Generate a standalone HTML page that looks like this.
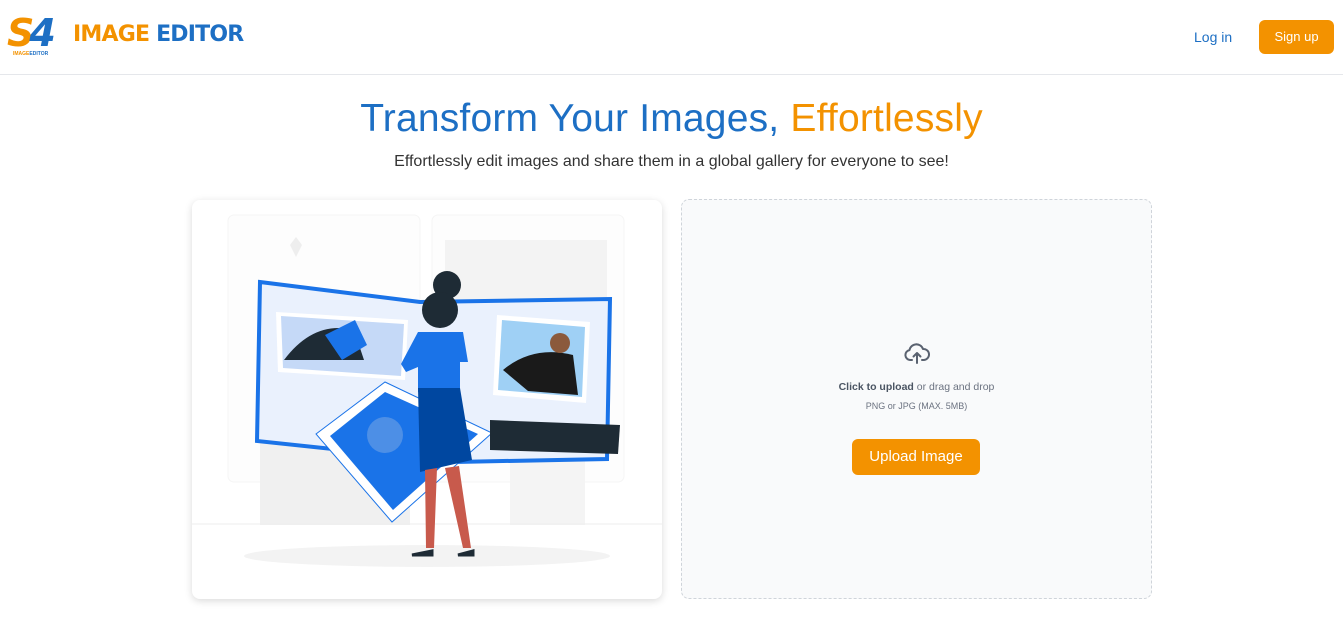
<!DOCTYPE html>
<html><head><meta charset="utf-8"><style>
*{margin:0;padding:0;box-sizing:border-box}
body{width:1343px;height:625px;background:#fff;font-family:"Liberation Sans",sans-serif;position:relative;overflow:hidden}
.hdr{position:absolute;left:0;top:0;width:1343px;height:75px;border-bottom:1px solid #e5e7eb}
.abs{position:absolute}
.t1{font-family:"DejaVu Sans","Liberation Sans",sans-serif;font-weight:bold}
</style></head><body>
<div class="hdr">
 <div class="abs t1" style="left:7px;top:12px;font-size:38px;font-style:italic;color:#f39200;letter-spacing:-5px;line-height:42px">S<span style="color:#1d6fc4">4</span></div>
 <div class="abs" style="left:13px;top:51px;font-size:5px;font-weight:bold;color:#f39200">IMAGE<span style="color:#1d6fc4">EDITOR</span></div>
 <div class="abs t1" style="left:73px;top:21px;font-size:22px;line-height:28px;color:#f39200;letter-spacing:-0.8px">IMAGE <span style="color:#1d6fc4">EDITOR</span></div>
 <div class="abs" style="left:1194px;top:29px;font-size:14px;color:#1d6fc4">Log in</div>
 <div class="abs" style="left:1259px;top:20px;width:75px;height:34px;background:#f39200;border-radius:6px;color:#fff;font-size:13px;text-align:center;line-height:34px">Sign up</div>
</div>
<div class="abs" style="left:0;width:1343px;top:96px;text-align:center;font-size:39px;color:#1d6fc4;line-height:46px;letter-spacing:0.2px">Transform Your Images, <span style="color:#f39200">Effortlessly</span></div>
<div class="abs" style="left:0;width:1343px;top:151px;text-align:center;font-size:16px;color:#333;line-height:22px">Effortlessly edit images and share them in a global gallery for everyone to see!</div>
<div class="abs" style="left:192px;top:200px;width:470px;height:399px;border-radius:8px;box-shadow:0 2px 8px rgba(0,0,0,.15);overflow:hidden;background:#fff">
<svg width="470" height="399" viewBox="192 200 470 399">
 <rect x="228" y="215" width="192" height="267" rx="6" fill="#fdfdfd" stroke="#f5f5f5"/>
 <rect x="432" y="215" width="192" height="267" rx="6" fill="#fdfdfd" stroke="#f5f5f5"/>
 <rect x="445" y="240" width="162" height="65" fill="#f3f3f3"/>
 <rect x="260" y="440" width="150" height="85" fill="#f0f0f0"/>
 <rect x="510" y="440" width="75" height="85" fill="#f4f4f4"/>
 <path d="M290 245 l6 -8 l6 8 l-6 12 z" fill="#eee"/>
 <line x1="192" y1="524" x2="662" y2="524" stroke="#eee"/>
 <ellipse cx="427" cy="556" rx="183" ry="11" fill="#f3f3f3"/>
 <polygon points="260,282 420,302 610,299 607,459 455,462 257,441" fill="#eaf1fd" stroke="#1a73e8" stroke-width="4"/>
 <polygon points="276,312 408,320 405,380 278,372" fill="#fff"/>
 <polygon points="281,316 404,324 401,376 283,368" fill="#c5d9f7"/>
 <path d="M284 360 q30 -40 70 -30 l10 30 z" fill="#1e2b35"/>
 <path d="M325 335 l30 -15 l12 25 l-25 15z" fill="#1a73e8"/>
 <polygon points="497,315 590,322 586,403 493,395" fill="#fff"/>
 <polygon points="502,320 585,327 582,397 498,390" fill="#9fd0f5"/>
 <path d="M503 370 q30 -25 70 -15 l5 40 l-50 -4z" fill="#1a1a1a"/>
 <circle cx="560" cy="343" r="10" fill="#8b5a3c"/>
 <polygon points="316,434 385,382 492,433 392,522" fill="#fff" stroke="#1a73e8"/>
 <polygon points="330,436 385,392 478,434 393,510" fill="#1a73e8"/>
 <circle cx="385" cy="435" r="18" fill="#4d8fe6"/>
 <polygon points="490,420 620,425 618,454 490,450" fill="#1e2b35"/>
 <circle cx="447" cy="285" r="14" fill="#1e2b35"/>
 <circle cx="440" cy="310" r="18" fill="#1e2b35"/>
 <path d="M418 332 l45 0 l5 30 l-8 0 l0 30 l-42 0 l0 -25 l-12 5 l-5 -8z" fill="#1a73e8"/>
 <path d="M418 388 l42 0 l12 72 l-52 12z" fill="#0047a0"/>
 <path d="M425 470 l12 -2 l-3 80 l-8 0z M445 468 l14 -2 l12 82 l-8 0z" fill="#c85a4c"/>
 <path d="M412 555 l20 -4 l0 4z M458 555 l15 -4 l0 4z" fill="#1e2b35" stroke="#1e2b35" stroke-width="3"/>
</svg>
</div>
<div class="abs" style="left:681px;top:199px;width:471px;height:400px;border:1px dashed #cfd4da;border-radius:8px;background:#f9fafb">
 <svg class="abs" style="left:222px;top:143px" width="26" height="22" viewBox="0 0 26 22" fill="none" stroke="#5a6270" stroke-width="2" stroke-linecap="round" stroke-linejoin="round"><path d="M8 17H6a5 5 0 0 1-.5-9.9A7 7 0 0 1 19 6a4.5 4.5 0 0 1 1 11h-2"/><path d="M13 20V10M9.5 13.5 13 10l3.5 3.5"/></svg>
 <div class="abs" style="left:0;width:469px;top:181px;text-align:center;font-size:10.5px;color:#6b7280"><b style="color:#4b5563">Click to upload</b> or drag and drop</div>
 <div class="abs" style="left:0;width:469px;top:201px;text-align:center;font-size:9px;color:#6b7280">PNG or JPG (MAX. 5MB)</div>
 <div class="abs" style="left:170px;top:239px;width:128px;height:36px;background:#f39200;border-radius:6px;color:#fff;font-size:15px;text-align:center;line-height:36px">Upload Image</div>
</div>
</body></html>
